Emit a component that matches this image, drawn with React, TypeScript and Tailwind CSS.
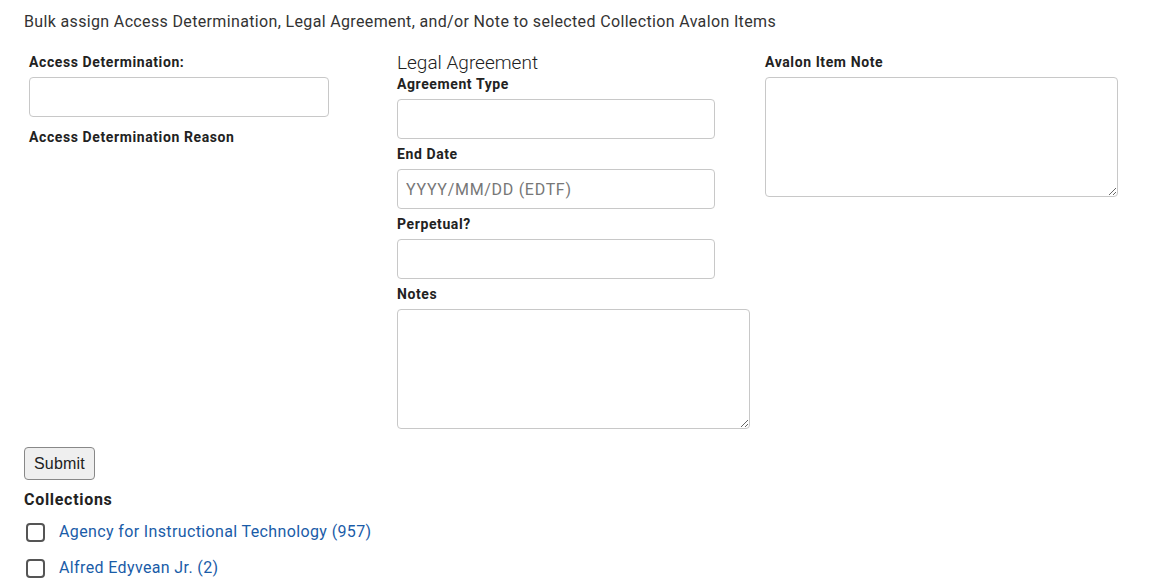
import React from 'react';

const font = { fontFamily: '"Roboto", "Liberation Sans", sans-serif' };

const Label = ({ children }: { children: React.ReactNode }) => (
  <label className="block h-5 text-[14px] leading-5 font-bold tracking-[0.6px] text-[#222]">{children}</label>
);

const inputCls =
  'block h-10 rounded-[4px] border border-[#c8c8c8] bg-white px-2 text-[16px] tracking-[0.7px] text-[#333] outline-none placeholder:text-[#777]';

export default function App() {
  const collections = [
    { name: 'Agency for Instructional Technology', count: 957 },
    { name: 'Alfred Edyvean Jr.', count: 2 },
  ];

  return (
    <div className="min-h-[586px] bg-white pl-6 text-[#333]" style={font}>
      <p className="pt-[10px] text-[16px] leading-6 tracking-[0.35px] text-[#333]">
        Bulk assign Access Determination, Legal Agreement, and/or Note to selected Collection Avalon Items
      </p>

      <form className="mt-[18px]">
        <div className="grid grid-cols-[368px_368px_368px]">
          {/* Access determination */}
          <div className="pl-[5px]">
            <Label>Access Determination:</Label>
            <input type="text" className={`${inputCls} mt-[5px] w-[300px]`} />
            <div className="mt-[10px]">
              <Label>Access Determination Reason</Label>
            </div>
          </div>

          {/* Legal agreement */}
          <div className="pl-[5px]">
            <h3 className="h-[22px] text-[19px] leading-[22px] font-light text-[#222]">Legal Agreement</h3>
            <Label>Agreement Type</Label>
            <input type="text" className={`${inputCls} mt-[5px] w-[318px]`} />
            <div className="mt-[5px]">
              <Label>End Date</Label>
            </div>
            <input type="text" placeholder="YYYY/MM/DD (EDTF)" className={`${inputCls} mt-[5px] w-[318px]`} />
            <div className="mt-[5px]">
              <Label>Perpetual?</Label>
            </div>
            <input type="text" className={`${inputCls} mt-[5px] w-[318px]`} />
            <div className="mt-[5px]">
              <Label>Notes</Label>
            </div>
            <textarea className={`${inputCls} mt-[5px] h-[120px] w-[353px] resize`} />
          </div>

          {/* Note */}
          <div className="pl-[5px]">
            <Label>Avalon Item Note</Label>
            <textarea className={`${inputCls} mt-[5px] h-[120px] w-[353px] resize`} />
          </div>
        </div>

        <button
          type="button"
          className="mt-[18px] h-[33px] rounded-[4px] border border-[#888] bg-[#efefef] px-[9px] text-[16px] tracking-[0.2px] text-[#222]"
          style={{ fontFamily: '"Liberation Sans", Arial, sans-serif' }}
        >
          Submit
        </button>
      </form>

      <h4 className="mt-[8px] text-[16px] leading-6 font-bold tracking-[0.7px] text-[#222]">Collections</h4>
      <ul className="mt-[2px]">
        {collections.map((c) => (
          <li key={c.name} className="flex h-9 items-center">
            <span className="ml-[2px] h-[19px] w-[19px] rounded-[4px] border-2 border-[#555]" />
            <a href="#" className="ml-[14px] text-[16px] tracking-[0.37px] text-[#1a5ca8]">
              {c.name} ({c.count})
            </a>
          </li>
        ))}
      </ul>
    </div>
  );
}
